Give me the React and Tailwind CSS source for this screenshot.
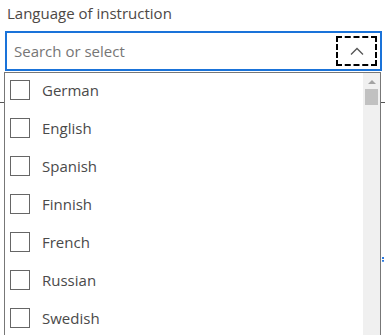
const languages = ['German', 'English', 'Spanish', 'Finnish', 'French', 'Russian', 'Swedish'];

function ChevronUp() {
    return (
        <svg width="14" height="8" viewBox="0 0 14 8" fill="none">
            <path d="M1 7.5 L7 1.5 L13 7.5" stroke="#555" strokeWidth="1.3" />
        </svg>
    );
}

export default function App() {
    return (
        <div className="relative w-[385px] h-[335px] overflow-hidden bg-white font-['Open_Sans','Lato',sans-serif]">
            {/* content behind the open list */}
            <div className="absolute left-0 right-0 top-[102px] h-px bg-[#555]"></div>
            <div className="absolute left-[382px] top-[257px] w-[2px] h-[5px] border-l-2 border-dotted border-[#2a7ae2]"></div>

            <div className="pl-[7px] pt-[3px] text-[15px] leading-[20px] text-[#4d4845]">
                Language of instruction
            </div>

            <div className="relative ml-[5px] mt-[8px] w-[377px]">
                <div className="h-[40px] border-2 border-[#1a73d9] bg-white flex items-center justify-between pl-[7px] pr-[3px]">
                    <span className="text-[15px] text-[#767676]">Search or select</span>
                    <div className="w-[41px] h-[30px] border-2 border-dashed border-black flex items-center justify-center">
                        <ChevronUp />
                    </div>
                </div>

                <div className="absolute left-[-1px] top-[41px] w-[377px] h-[270px] bg-white border border-[#777] flex">
                    <ul className="flex-1">
                        {languages.map((lang) => (
                            <li key={lang} className="h-[38px] flex items-start pt-[7px] pl-[5px]">
                                <span className="w-[20px] h-[20px] border border-[#666] bg-white"></span>
                                <span className="ml-[12px] text-[15px] leading-[20px] text-[#4a4a4a]">{lang}</span>
                            </li>
                        ))}
                    </ul>
                    <div className="w-[17px] bg-[#f0f0f0] flex flex-col items-center">
                        <div className="mt-[7px] w-0 h-0 border-l-[4px] border-r-[4px] border-b-[4px] border-l-transparent border-r-transparent border-b-[#a3a3a3]"></div>
                        <div className="mt-[5px] w-[13px] h-[16px] bg-[#c1c1c1]"></div>
                    </div>
                </div>
            </div>
        </div>
    );
}
